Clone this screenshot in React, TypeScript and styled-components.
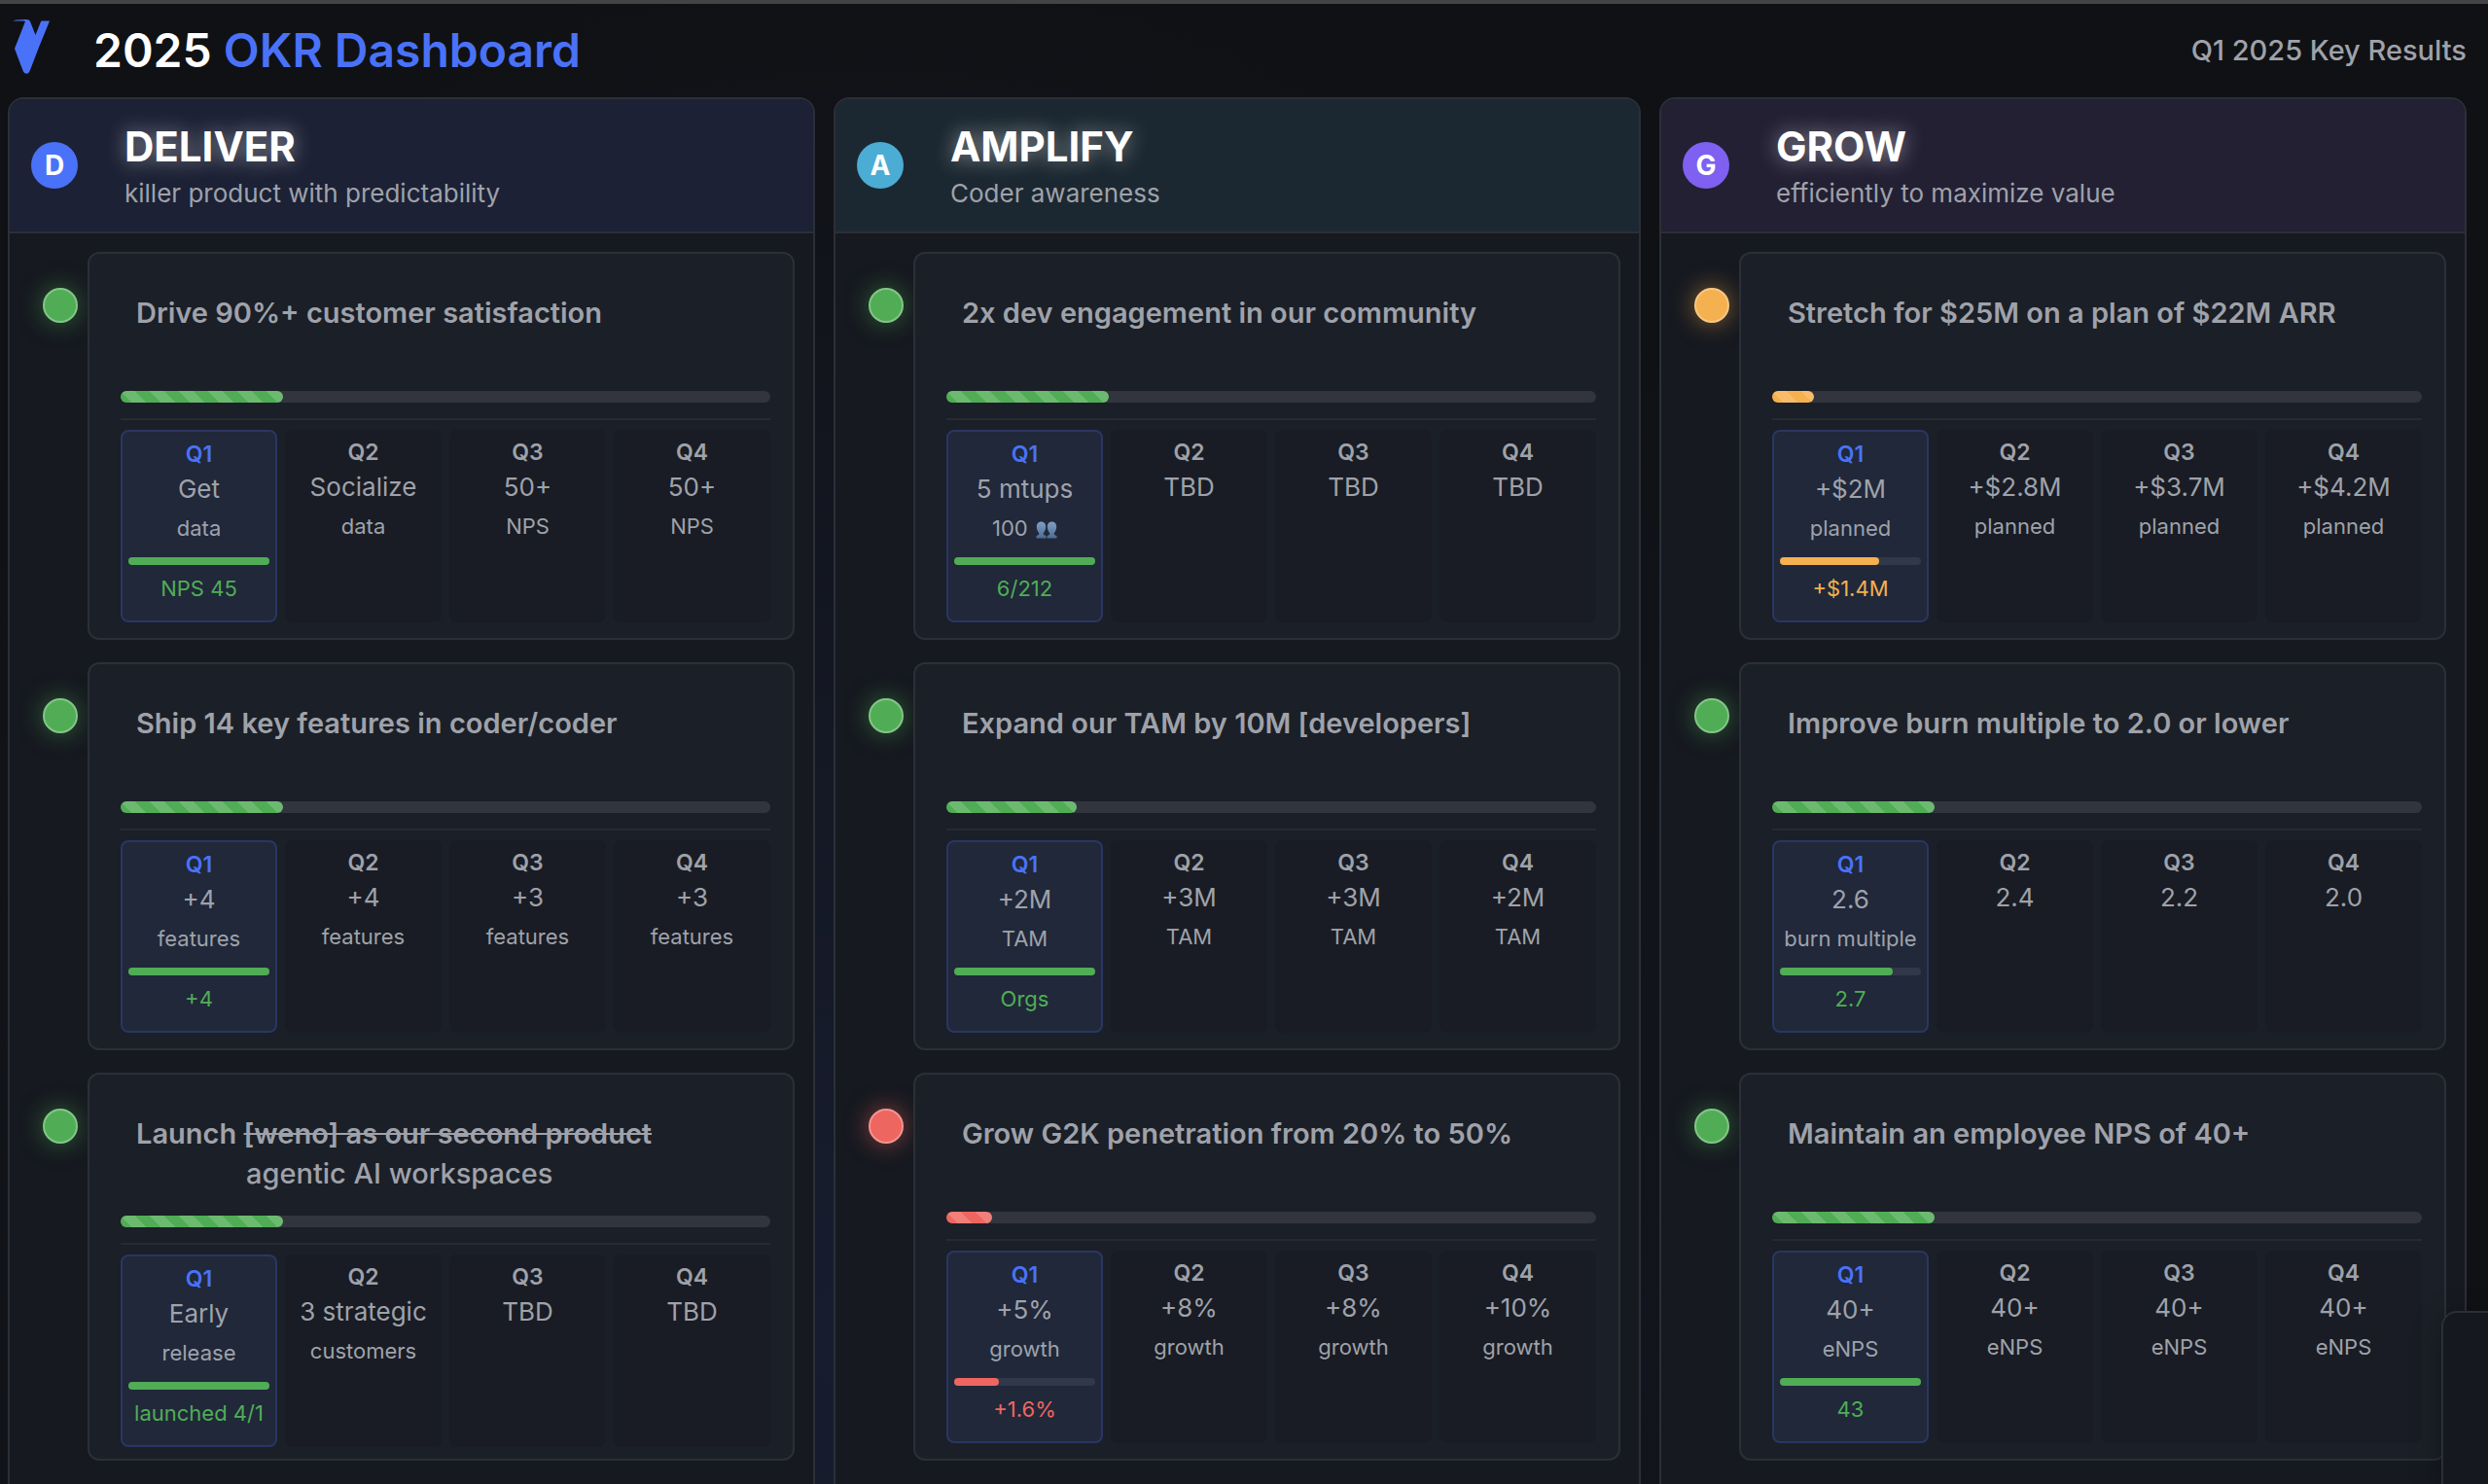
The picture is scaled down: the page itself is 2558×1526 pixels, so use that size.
import React from "react";
import styled, { createGlobalStyle } from "styled-components";

type Status = "green" | "orange" | "red";

const COLORS = {
  text: "#9fa2aa",
  blue: "#4a72f8",
  border: "#2b2f38",
  green: "#50ad55",
  orange: "#f5b04f",
  red: "#ee6660",
};

const RING: Record<Status, string> = {
  green: "#84c588",
  orange: "#f8c884",
  red: "#f39490",
};

const GLOW: Record<Status, string> = {
  green: "rgba(76, 175, 80, 0.5)",
  orange: "rgba(255, 179, 71, 0.5)",
  red: "rgba(255, 107, 100, 0.5)",
};

interface Quarter {
  value: string;
  unit?: string;
  people?: boolean;
}

interface KeyResult {
  title: string;
  struck?: string;
  replacement?: string;
  status: Status;
  progress: number;
  quarters: Quarter[];
  current: { progress: number; result: string };
}

interface Objective {
  letter: string;
  name: string;
  tagline: string;
  accent: string;
  tint: string;
  results: KeyResult[];
}

const OBJECTIVES: Objective[] = [
  {
    letter: "D",
    name: "DELIVER",
    tagline: "killer product with predictability",
    accent: "#4a72f8",
    tint: "#1c2135",
    results: [
      {
        title: "Drive 90%+ customer satisfaction",
        status: "green",
        progress: 25,
        quarters: [
          { value: "Get", unit: "data" },
          { value: "Socialize", unit: "data" },
          { value: "50+", unit: "NPS" },
          { value: "50+", unit: "NPS" },
        ],
        current: { progress: 100, result: "NPS 45" },
      },
      {
        title: "Ship 14 key features in coder/coder",
        status: "green",
        progress: 25,
        quarters: [
          { value: "+4", unit: "features" },
          { value: "+4", unit: "features" },
          { value: "+3", unit: "features" },
          { value: "+3", unit: "features" },
        ],
        current: { progress: 100, result: "+4" },
      },
      {
        title: "Launch ",
        struck: "[weno] as our second product",
        replacement: "agentic AI workspaces",
        status: "green",
        progress: 25,
        quarters: [
          { value: "Early", unit: "release" },
          { value: "3 strategic", unit: "customers" },
          { value: "TBD" },
          { value: "TBD" },
        ],
        current: { progress: 100, result: "launched 4/1" },
      },
    ],
  },
  {
    letter: "A",
    name: "AMPLIFY",
    tagline: "Coder awareness",
    accent: "#4badd4",
    tint: "#1c2831",
    results: [
      {
        title: "2x dev engagement in our community",
        status: "green",
        progress: 25,
        quarters: [
          { value: "5 mtups", unit: "100 ", people: true },
          { value: "TBD" },
          { value: "TBD" },
          { value: "TBD" },
        ],
        current: { progress: 100, result: "6/212" },
      },
      {
        title: "Expand our TAM by 10M [developers]",
        status: "green",
        progress: 20,
        quarters: [
          { value: "+2M", unit: "TAM" },
          { value: "+3M", unit: "TAM" },
          { value: "+3M", unit: "TAM" },
          { value: "+2M", unit: "TAM" },
        ],
        current: { progress: 100, result: "Orgs" },
      },
      {
        title: "Grow G2K penetration from 20% to 50%",
        status: "red",
        progress: 7,
        quarters: [
          { value: "+5%", unit: "growth" },
          { value: "+8%", unit: "growth" },
          { value: "+8%", unit: "growth" },
          { value: "+10%", unit: "growth" },
        ],
        current: { progress: 32, result: "+1.6%" },
      },
    ],
  },
  {
    letter: "G",
    name: "GROW",
    tagline: "efficiently to maximize value",
    accent: "#7e61f0",
    tint: "#232034",
    results: [
      {
        title: "Stretch for $25M on a plan of $22M ARR",
        status: "orange",
        progress: 6.4,
        quarters: [
          { value: "+$2M", unit: "planned" },
          { value: "+$2.8M", unit: "planned" },
          { value: "+$3.7M", unit: "planned" },
          { value: "+$4.2M", unit: "planned" },
        ],
        current: { progress: 70, result: "+$1.4M" },
      },
      {
        title: "Improve burn multiple to 2.0 or lower",
        status: "green",
        progress: 25,
        quarters: [
          { value: "2.6", unit: "burn multiple" },
          { value: "2.4" },
          { value: "2.2" },
          { value: "2.0" },
        ],
        current: { progress: 80, result: "2.7" },
      },
      {
        title: "Maintain an employee NPS of 40+",
        status: "green",
        progress: 25,
        quarters: [
          { value: "40+", unit: "eNPS" },
          { value: "40+", unit: "eNPS" },
          { value: "40+", unit: "eNPS" },
          { value: "40+", unit: "eNPS" },
        ],
        current: { progress: 100, result: "43" },
      },
    ],
  },
];

const GlobalStyle = createGlobalStyle`
  *, *::before, *::after { box-sizing: border-box; }
  body {
    margin: 0;
    background: #101114;
    color: ${COLORS.text};
    font-family: Inter, "Liberation Sans", sans-serif;
    -webkit-font-smoothing: antialiased;
  }
  h1, h2, h3, p { margin: 0; font-weight: inherit; }
`;

const Page = styled.div`
  height: 100vh;
  overflow: hidden;
  border-top: 4px solid #434443;
  background:
    radial-gradient(ellipse 45% 95% at 35% 90%, rgba(74, 114, 248, 0.12), transparent),
    #101114;
`;

const TopBar = styled.header`
  display: flex;
  align-items: center;
  gap: 40px;
  min-height: 96px;
  padding: 0 22px 0 8px;
`;

const PageTitle = styled.h1`
  flex: 1;
  color: #ffffff;
  font-size: 48px;
  font-weight: 600;
  line-height: 58px;
`;

const TitleAccent = styled.span`
  color: ${COLORS.blue};
`;

const Period = styled.p`
  font-size: 29px;
  font-weight: 500;
  line-height: 34px;
`;

const Columns = styled.main`
  display: grid;
  grid-template-columns: repeat(3, minmax(0, 1fr));
  gap: 19px;
  padding: 0 22px 0 8px;
`;

const Column = styled.section`
  overflow: hidden;
  padding-bottom: 40px;
  border: 2px solid ${COLORS.border};
  border-radius: 16px;
  background: #161920;
`;

const ColumnHeader = styled.header<{ $tint: string }>`
  display: flex;
  align-items: center;
  gap: 48px;
  padding: 21px 22px;
  border-bottom: 2px solid ${COLORS.border};
  background: ${(p) => p.$tint};
`;

const Badge = styled.span<{ $color: string }>`
  display: grid;
  place-items: center;
  width: 48px;
  height: 48px;
  border-radius: 50%;
  background: ${(p) => p.$color};
  color: #ffffff;
  font-size: 28px;
  font-weight: 700;
`;

const ColumnHeading = styled.div`
  display: flex;
  flex-direction: column;
  gap: 2px;
`;

const ColumnName = styled.h2`
  color: #ffffff;
  font-size: 42px;
  font-weight: 700;
  line-height: 56px;
  text-shadow: 0 0 20px rgba(255, 255, 255, 0.5);
`;

const Tagline = styled.p`
  font-size: 26px;
  line-height: 36px;
`;

const ResultList = styled.div`
  display: flex;
  flex-direction: column;
  gap: 23px;
  padding: 19px 19px 0 34px;
`;

const ResultRow = styled.div`
  display: flex;
  align-items: flex-start;
  gap: 10px;
`;

const StatusDot = styled.span<{ $status: Status }>`
  flex: none;
  width: 36px;
  height: 36px;
  margin-top: 37px;
  border: 2px solid ${(p) => RING[p.$status]};
  border-radius: 50%;
  background: ${(p) => COLORS[p.$status]};
  box-shadow: 0 0 24px ${(p) => GLOW[p.$status]};
`;

const Card = styled.article`
  flex: 1;
  min-width: 0;
  min-height: 399px;
  padding: 40px 23px 12px 32px;
  border: 2px solid ${COLORS.border};
  border-radius: 12px;
  background: #1b1f27;
`;

const CardTitle = styled.h3`
  min-height: 78px;
  margin-bottom: 23px;
  padding-left: 16px;
  font-size: 29px;
  font-weight: 600;
  line-height: 41px;
`;

const Replacement = styled.span`
  display: block;
  padding-left: 113px;
  font-weight: 500;
`;

const Track = styled.div`
  height: 12px;
  border-radius: 6px;
  background: #32353d;
`;

const Fill = styled.div<{ $status: Status }>`
  height: 100%;
  border-radius: 6px;
  background:
    linear-gradient(
      45deg,
      rgba(255, 255, 255, 0.16) 25%,
      transparent 25%,
      transparent 50%,
      rgba(255, 255, 255, 0.16) 50%,
      rgba(255, 255, 255, 0.16) 75%,
      transparent 75%
    ) 0 0 / 30px 30px,
    ${(p) => COLORS[p.$status]};
`;

const Quarters = styled.div`
  display: grid;
  grid-template-columns: repeat(4, minmax(0, 1fr));
  gap: 8px;
  margin-top: 16px;
  padding-top: 10px;
  border-top: 2px solid #262a32;
`;

const QuarterCell = styled.div<{ $current: boolean }>`
  padding: 7px 6px 13px;
  border: ${(p) => (p.$current ? "2px solid #2a3664" : "none")};
  border-radius: 8px;
  background: ${(p) => (p.$current ? "#20283a" : "#191c24")};
  text-align: center;
  white-space: nowrap;
`;

const QuarterLabel = styled.p<{ $current: boolean }>`
  color: ${(p) => (p.$current ? COLORS.blue : COLORS.text)};
  font-size: 23px;
  font-weight: 600;
  line-height: 32px;
`;

const QuarterValue = styled.p`
  font-size: 26px;
  line-height: 40px;
`;

const QuarterUnit = styled.p`
  font-size: 22px;
  line-height: 41px;
`;

const MiniTrack = styled.div`
  height: 8px;
  margin: 9px 0 4px;
  border-radius: 4px;
  background: #30384a;
`;

const MiniFill = styled.div<{ $status: Status }>`
  height: 100%;
  border-radius: 4px;
  background: ${(p) => COLORS[p.$status]};
`;

const QuarterResult = styled.p<{ $status: Status }>`
  color: ${(p) => COLORS[p.$status]};
  font-size: 22px;
  line-height: 40px;
`;

const SidePanel = styled.aside`
  position: fixed;
  right: 0;
  bottom: 0;
  width: 48px;
  height: 178px;
  border: solid ${COLORS.border};
  border-width: 2px 0 0 2px;
  border-radius: 16px 0 0 0;
  background: #15181f;
  box-shadow: 0 8px 32px rgba(0, 0, 0, 0.3);
`;

const PeopleGlyph = styled.svg`
  margin-left: 2px;
  vertical-align: -3px;
`;

function Logo() {
  return (
    <svg width="48" height="64" viewBox="0 0 48 64" fill={COLORS.blue} aria-hidden="true">
      <path d="M5 1.6 8.5.4 19 0c2.300 0 3.400.8 4.200 2.600L28.500 16 34 2.300C34.300 1.600 34.600 1.400 35.200 1.400H43L32 28.500 23.200 51.500C22 54.600 21.200 55.800 19.300 55.800 17.300 55.800 16.300 54.600 15.300 52L7 30 18 2 16 1.600Z" />
    </svg>
  );
}

function PeopleIcon() {
  return (
    <PeopleGlyph width="22" height="18" viewBox="0 0 22 18" role="img" aria-label="people">
      <defs>
        <linearGradient id="bust" x1="0" y1="0" x2="0" y2="1">
          <stop offset="0" stopColor="#7fa0c4" />
          <stop offset="1" stopColor="#4d6a91" />
        </linearGradient>
      </defs>
      <g fill="url(#bust)">
        <path d="M5.500 0.500C8.600.5 10.200 2.700 10.200 5.700 10.200 8.600 8.900 10.800 7.800 12.200 7.500 13.800 8.600 14.300 10.500 15V17.500H.5V15C2.400 14.300 3.500 13.800 3.200 12.200 2.100 10.800.8 8.600.8 5.700.8 2.700 2.400.5 5.500.5Z" />
        <path d="M16.500 0.500C19.600.5 21.200 2.700 21.200 5.700 21.200 8.600 19.900 10.800 18.800 12.200 18.500 13.800 19.600 14.300 21.500 15V17.500H11.500V15C13.400 14.300 14.500 13.800 14.200 12.200 13.100 10.800 11.800 8.600 11.800 5.700 11.800 2.700 13.400.5 16.500.5Z" />
      </g>
    </PeopleGlyph>
  );
}

function ResultCard({ result }: { result: KeyResult }) {
  return (
    <ResultRow>
      <StatusDot $status={result.status} />
      <Card>
        <CardTitle>
          {result.title}
          {result.struck && <s>{result.struck}</s>}
          {result.replacement && <Replacement>{result.replacement}</Replacement>}
        </CardTitle>
        <Track role="progressbar" aria-label="Year progress" aria-valuenow={result.progress}>
          <Fill $status={result.status} style={{ width: `${result.progress}%` }} />
        </Track>
        <Quarters>
          {result.quarters.map((quarter, i) => (
            <QuarterCell key={i} $current={i === 0}>
              <QuarterLabel $current={i === 0}>Q{i + 1}</QuarterLabel>
              <QuarterValue>{quarter.value}</QuarterValue>
              {quarter.unit && (
                <QuarterUnit>
                  {quarter.unit}
                  {quarter.people && <PeopleIcon />}
                </QuarterUnit>
              )}
              {i === 0 && (
                <>
                  <MiniTrack
                    role="progressbar"
                    aria-label="Quarter progress"
                    aria-valuenow={result.current.progress}
                  >
                    <MiniFill
                      $status={result.status}
                      style={{ width: `${result.current.progress}%` }}
                    />
                  </MiniTrack>
                  <QuarterResult $status={result.status}>{result.current.result}</QuarterResult>
                </>
              )}
            </QuarterCell>
          ))}
        </Quarters>
      </Card>
    </ResultRow>
  );
}

export default function App() {
  return (
    <>
      <GlobalStyle />
      <Page>
        <TopBar>
          <Logo />
          <PageTitle>
            2025 <TitleAccent>OKR Dashboard</TitleAccent>
          </PageTitle>
          <Period>Q1 2025 Key Results</Period>
        </TopBar>
        <Columns>
          {OBJECTIVES.map((objective) => (
            <Column key={objective.letter}>
              <ColumnHeader $tint={objective.tint}>
                <Badge $color={objective.accent}>{objective.letter}</Badge>
                <ColumnHeading>
                  <ColumnName>{objective.name}</ColumnName>
                  <Tagline>{objective.tagline}</Tagline>
                </ColumnHeading>
              </ColumnHeader>
              <ResultList>
                {objective.results.map((result) => (
                  <ResultCard key={result.title} result={result} />
                ))}
              </ResultList>
            </Column>
          ))}
        </Columns>
        <SidePanel />
      </Page>
    </>
  );
}
